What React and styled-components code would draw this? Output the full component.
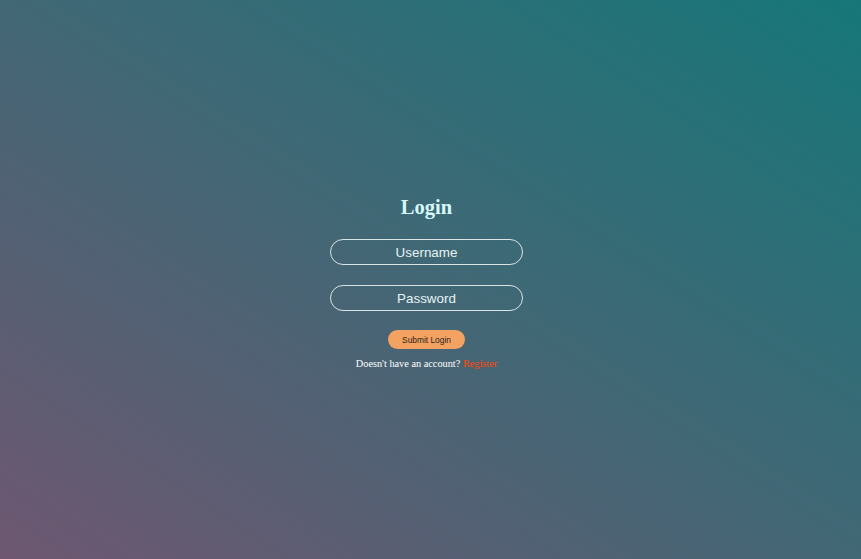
import React from "react";
import styled, { createGlobalStyle } from "styled-components";

const GlobalStyle = createGlobalStyle`
  html, body {
    margin: 0;
    padding: 0;
    height: 100%;
  }

  #root {
    height: 100%;
  }
`;

const Page = styled.main`
  align-items: center;
  background: linear-gradient(to top right, #6e5771, #167779);
  box-sizing: border-box;
  display: flex;
  height: 100vh;
  justify-content: center;
  padding-right: 8px;
  padding-top: 6px;
  width: 100%;
`;

const Form = styled.form`
  align-items: center;
  display: flex;
  flex-direction: column;
`;

const Title = styled.h2`
  color: #d6f8f8;
  font-family: "Liberation Serif", serif;
  font-size: 20.5px;
  font-weight: bold;
  margin: 0 0 20px;
`;

const Field = styled.input`
  background: transparent;
  border: 1px solid #d9e4e6;
  border-radius: 13px;
  box-sizing: border-box;
  color: #eef8f8;
  font-family: "Liberation Sans", Arial, sans-serif;
  font-size: 13.4px;
  height: 26px;
  margin-bottom: 20px;
  outline: none;
  text-align: center;
  width: 193px;

  &::placeholder {
    color: #e8f4f4;
    opacity: 1;
  }
`;

const SubmitButton = styled.button`
  background: #f4a261;
  border: none;
  border-radius: 10px;
  color: #2a2320;
  cursor: pointer;
  font-family: "Liberation Sans", Arial, sans-serif;
  font-size: 8.4px;
  height: 19px;
  margin-top: -1px;
  width: 77px;
`;

const Note = styled.p`
  color: #ffffff;
  font-family: "Liberation Serif", serif;
  font-size: 10.3px;
  margin: 9px 0 0;
`;

const RegisterLink = styled.a`
  color: #ff4500;
  text-decoration: none;
`;

export default function App() {
  return (
    <>
      <GlobalStyle />
      <Page>
        <Form onSubmit={(event) => event.preventDefault()}>
          <Title>Login</Title>
          <Field type="text" placeholder="Username" />
          <Field type="password" placeholder="Password" />
          <SubmitButton type="submit">Submit Login</SubmitButton>
          <Note>
            Doesn't have an account? <RegisterLink href="#">Register</RegisterLink>
          </Note>
        </Form>
      </Page>
    </>
  );
}
